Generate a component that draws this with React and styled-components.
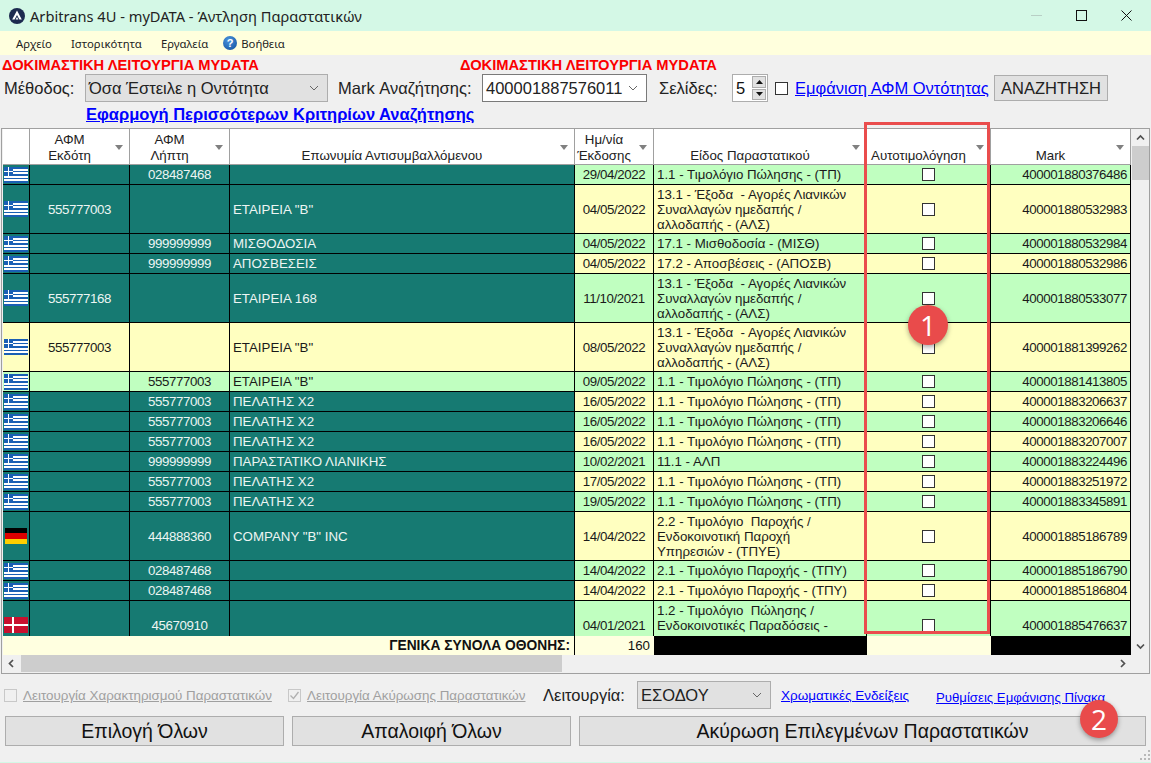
import React from 'react';
import styled, { createGlobalStyle } from 'styled-components';

const GlobalStyle = createGlobalStyle`
  html, body {
    margin: 0;
    padding: 0;
    background: #d4f8e6;
  }
  * {
    box-sizing: border-box;
  }
`;

const Window = styled.div`
  position: relative;
  width: 1151px;
  height: 763px;
  overflow: hidden;
  background: #f0f0f0;
  font-family: "Liberation Sans", Arial, sans-serif;
  color: #111;
  display: flex;
  flex-direction: column;
  border-bottom: 1px solid #d4f8e6;
`;

const TitleBar = styled.div`
  height: 31px;
  flex: none;
  background: #d4f8e6;
  display: flex;
  align-items: center;
  padding-left: 9px;
`;

const Title = styled.div`
  margin-left: 5px;
  font-family: "Noto Sans", sans-serif;
  font-size: 14.65px;
  color: #222;
`;

const WinButtons = styled.div`
  margin-left: auto;
  display: flex;
  align-items: center;
  gap: 34px;
  padding-right: 19px;
`;

const MenuBar = styled.div`
  height: 24px;
  flex: none;
  background: #ffffdd;
  display: flex;
  align-items: center;
  padding-left: 16px;
  font-family: "Noto Sans", sans-serif;
  font-size: 11.3px;
  color: #222;
`;

const MenuItem = styled.span`
  margin-right: ${p => p.$gap || 19}px;
`;

const HelpIcon = styled.span`
  width: 14px;
  height: 14px;
  margin-right: 4px;
  border-radius: 50%;
  background: radial-gradient(circle at 40% 30%, #4a93dd, #0f4f9c);
  color: #fff;
  font: bold 11px "Liberation Sans", sans-serif;
  display: flex;
  align-items: center;
  justify-content: center;
`;

const WarningRow = styled.div`
  height: 19px;
  flex: none;
  display: grid;
  grid-template-columns: 458px auto;
  align-items: center;
  padding-left: 2px;
  color: #fb0000;
  font-size: 14.7px;
  font-weight: bold;
`;

const Toolbar = styled.div`
  height: 28px;
  flex: none;
  display: flex;
  align-items: center;
  padding-left: 4px;
  font-size: 16.5px;
`;

const Label = styled.span`
  flex: none;
  width: ${p => p.$width}px;
  color: #222;
  font-size: 16.5px;
`;

const Combo = styled.div`
  width: ${p => p.$width}px;
  height: 28px;
  flex: none;
  padding: 0 8px 0 3px;
  display: flex;
  align-items: center;
  justify-content: space-between;
  background: ${p => (p.$plain ? '#fff' : '#e1e1e1')};
  border: 1px solid ${p => (p.$plain ? '#7a7a7a' : '#adadad')};
  font-size: 16.5px;
  color: #222;
  margin-right: ${p => p.$gap || 0}px;
`;

const Spinner = styled.div`
  width: 36px;
  height: 28px;
  flex: none;
  padding: 1px 1px 1px 3px;
  display: flex;
  align-items: center;
  justify-content: space-between;
  background: #fff;
  border: 1px solid #adadad;
  margin-right: 7px;
`;

const SpinButtons = styled.div`
  width: 14px;
  height: 100%;
  display: flex;
  flex-direction: column;
  gap: 1px;
`;

const SpinButton = styled.div`
  flex: 1;
  background: #e1e1e1;
  border: 1px solid #adadad;
  display: flex;
  align-items: center;
  justify-content: center;
`;

const PlainCheck = styled.span`
  width: 13px;
  height: 13px;
  flex: none;
  display: block;
  background: #fff;
  border: 1px solid #333;
  margin-right: ${p => p.$gap || 0}px;
`;

const Link = styled.a`
  flex: none;
  width: ${p => (p.$width ? `${p.$width}px` : 'auto')};
  color: #0000ff;
  text-decoration: underline;
  font-size: ${p => p.$size || 16.5}px;
  font-weight: ${p => (p.$bold ? 'bold' : 'normal')};
  white-space: nowrap;
`;

const SearchButton = styled.div`
  width: 114px;
  height: 26px;
  flex: none;
  background: #e1e1e1;
  border: 1px solid #adadad;
  font-size: 16.5px;
  color: #222;
  display: flex;
  align-items: center;
  justify-content: center;
`;

const LinkRow = styled.div`
  height: 26px;
  flex: none;
  display: flex;
  align-items: center;
  padding: 0 0 2px 86px;
`;

const Panel = styled.div`
  height: 546px;
  flex: none;
  margin: 0 1px;
  padding-left: 1px;
  border: 1px solid #a0a0a0;
  display: grid;
  grid-template-columns: 1128px 18px;
  grid-template-rows: 526px 17px;
`;

const GridArea = styled.div`
  display: flex;
  flex-direction: column;
  min-width: 0;
`;

const COLUMNS = '27px 100px 100px 345px 79px 213px 124px 140px';

const HeaderRow = styled.div`
  height: 36px;
  flex: none;
  display: grid;
  grid-template-columns: ${COLUMNS};
  background: #fff;
  border-bottom: 1px solid #a0a0a0;
`;

const HeaderCell = styled.div`
  position: relative;
  display: flex;
  align-items: flex-end;
  justify-content: center;
  padding: 0 20px 0 0;
  border-right: 1px solid #a0a0a0;
  font-size: 13.3px;
  line-height: 16px;
  text-align: center;
  white-space: pre-line;
  color: #222;
`;

const Caret = styled.span`
  position: absolute;
  right: 6px;
  top: 16px;
  width: 0;
  height: 0;
  border-left: 4.5px solid transparent;
  border-right: 4.5px solid transparent;
  border-top: 5px solid #808080;
`;

const Body = styled.div`
  height: 471px;
  flex: none;
  overflow: hidden;
`;

const Row = styled.div`
  height: ${p => p.$h}px;
  display: grid;
  grid-template-columns: ${COLUMNS};
`;

const cellColors = {
  teal: '#167a72',
  green: '#c0ffc0',
  yellow: '#ffffc0',
};

const Cell = styled.div`
  display: flex;
  align-items: center;
  justify-content: ${p => p.$align || 'center'};
  padding: 0 ${p => p.$padRight || 0}px 0 ${p => p.$padLeft || 0}px;
  background: ${p => cellColors[p.$tone]};
  color: ${p => (p.$tone === 'teal' ? '#edf5f3' : '#1a1a1a')};
  border-right: 1px solid #000;
  border-bottom: 1px solid #000;
  font-size: 13.3px;
  line-height: 15px;
  letter-spacing: ${p => (p.$digits ? '-0.42px' : '0')};
  white-space: pre;
  overflow: hidden;
`;

const Footer = styled.div`
  height: 19px;
  flex: none;
  display: grid;
  grid-template-columns: 572px 79px 213px 124px 140px;
  background: #ffffe0;
  font-size: 13.3px;
`;

const FooterCell = styled.div`
  display: flex;
  align-items: center;
  justify-content: flex-end;
  padding-right: 4px;
  background: ${p => (p.$black ? '#000' : 'transparent')};
  font-size: ${p => (p.$bold ? '13.8px' : '13.3px')};
  font-weight: ${p => (p.$bold ? 'bold' : 'normal')};
  border-right: ${p => (p.$line ? '1px solid #000' : '0')};
`;

const VScroll = styled.div`
  background: #f0f0f0;
  display: flex;
  flex-direction: column;
  align-items: center;
`;

const VThumb = styled.div`
  width: 17px;
  height: 34px;
  background: #cdcdcd;
  flex: none;
`;

const ArrowSlot = styled.div`
  flex: none;
  width: 17px;
  height: 17px;
  display: flex;
  align-items: center;
  justify-content: center;
  margin-top: ${p => (p.$end ? 'auto' : '0')};
  margin-left: ${p => (p.$endX ? 'auto' : '0')};
`;

const HScroll = styled.div`
  display: flex;
  background: #f0f0f0;
`;

const HThumb = styled.div`
  width: 541px;
  height: 17px;
  background: #cdcdcd;
  margin-left: 1px;
`;

const Options = styled.div`
  height: 42px;
  flex: none;
  display: flex;
  align-items: center;
  padding-left: 4px;
`;

const DisabledOption = styled.div`
  flex: none;
  width: ${p => p.$width}px;
  display: flex;
  align-items: center;
  gap: 6px;
  color: #a0a0a0;
  font-size: 13.4px;
  text-decoration: underline;
`;

const DisabledBox = styled.span`
  width: 13px;
  height: 13px;
  flex: none;
  background: #f0f0f0;
  border: 1px solid #c8c8c8;
  display: flex;
  align-items: center;
  justify-content: center;
`;

const OptionLink = styled(Link)`
  position: relative;
  top: ${p => p.$drop || 0}px;
`;

const Actions = styled.div`
  height: 30px;
  flex: none;
  display: grid;
  grid-template-columns: 279px 279px 567px;
  gap: 8px;
  padding-left: 5px;
`;

const ActionButton = styled.div`
  background: #e1e1e1;
  border: 1px solid #adadad;
  font-size: 19.5px;
  color: #111;
  display: flex;
  align-items: center;
  justify-content: center;
`;

const Grip = styled.svg`
  position: absolute;
  right: 1px;
  bottom: 2px;
`;

const Highlight = styled.div`
  position: absolute;
  left: 864px;
  top: 122px;
  width: 126px;
  height: 512px;
  border: 3px solid #ea4d4d;
  pointer-events: none;
`;

const Badge = styled.div`
  position: absolute;
  left: ${p => p.$x}px;
  top: ${p => p.$y}px;
  width: ${p => p.$size}px;
  height: ${p => p.$size}px;
  border-radius: 50%;
  background: #e94b4b;
  box-shadow: 0 2px 5px rgba(0, 0, 0, 0.35);
  color: #fff;
  font-family: "Open Sans", sans-serif;
  font-size: 28px;
  display: flex;
  align-items: center;
  justify-content: center;
`;

const AppLogo = () => (
  <svg width="16" height="16" viewBox="0 0 16 16">
    <circle cx="8" cy="8" r="8" fill="#1d2b4f" />
    <path d="M8 2.6 L12.8 11.4 L10.4 11.4 L8 7 L5.6 11.4 L3.2 11.4 Z" fill="#fff" />
    <path d="M6.6 11.4 L8 9 L9.4 11.4 Z" fill="#fff" />
  </svg>
);

const WindowIcons = () => (
  <WinButtons>
    <svg width="11" height="11" viewBox="0 0 11 11">
      <path d="M0 5.5 H11" stroke="#b8cfc5" strokeWidth="1" />
    </svg>
    <svg width="11" height="11" viewBox="0 0 11 11">
      <rect x="0.5" y="0.5" width="10" height="10" fill="none" stroke="#111" strokeWidth="1" />
    </svg>
    <svg width="11" height="11" viewBox="0 0 11 11">
      <path d="M0.5 0.5 L10.5 10.5 M10.5 0.5 L0.5 10.5" stroke="#111" strokeWidth="1" />
    </svg>
  </WinButtons>
);

const Chevron = () => (
  <svg width="10" height="6" viewBox="0 0 10 6">
    <path d="M1 1 L5 5 L9 1" fill="none" stroke="#666" strokeWidth="1" />
  </svg>
);

const ScrollArrow = ({ d }) => (
  <svg width="9" height="9" viewBox="0 0 9 9">
    <path d={d} fill="none" stroke="#505050" strokeWidth="1.7" />
  </svg>
);

const SpinArrow = ({ down }) => (
  <svg width="7" height="4" viewBox="0 0 7 4">
    <path d={down ? 'M0 0 H7 L3.5 4 Z' : 'M0 4 H7 L3.5 0 Z'} fill="#111" />
  </svg>
);

const GreekFlag = () => (
  <svg width="24" height="16" viewBox="0 0 27 18" shapeRendering="crispEdges">
    <rect width="27" height="18" fill="#1a5fb4" />
    <path d="M10 3 H27 M10 7 H27 M0 11 H27 M0 15 H27" stroke="#fff" strokeWidth="2" />
    <path d="M5 0 V10 M0 5 H10" stroke="#fff" strokeWidth="2" />
  </svg>
);

const GermanFlag = () => (
  <svg width="24" height="16" viewBox="0 0 24 18" shapeRendering="crispEdges">
    <rect width="24" height="6" fill="#000" />
    <rect y="6" width="24" height="6" fill="#dd0000" />
    <rect y="12" width="24" height="6" fill="#ffce00" />
  </svg>
);

const DanishFlag = () => (
  <svg width="24" height="16" viewBox="0 0 24 16" shapeRendering="crispEdges">
    <rect width="24" height="16" fill="#c8102e" />
    <path d="M9 0 V16 M0 8 H24" stroke="#fff" strokeWidth="2" />
  </svg>
);

const flags = { gr: GreekFlag, de: GermanFlag, dk: DanishFlag };

const INV = '1.1 - Τιμολόγιο Πώλησης - (ΤΠ)';
const EXP = '13.1 - Έξοδα  - Αγορές Λιανικών\nΣυναλλαγών ημεδαπής /\nαλλοδαπής - (ΑΛΣ)';
const SRV = '2.1 - Τιμολόγιο Παροχής - (ΤΠΥ)';

const rows = [
  { receiver: '028487468', date: '29/04/2022', type: INV, mark: '400001880376486' },
  { h: 49, issuer: '555777003', name: 'ΕΤΑΙΡΕΙΑ "Β"', date: '04/05/2022', type: EXP, mark: '400001880532983' },
  { receiver: '999999999', name: 'ΜΙΣΘΟΔΟΣΙΑ', date: '04/05/2022', type: '17.1 - Μισθοδοσία - (ΜΙΣΘ)', mark: '400001880532984' },
  { receiver: '999999999', name: 'ΑΠΟΣΒΕΣΕΙΣ', date: '04/05/2022', type: '17.2 - Αποσβέσεις - (ΑΠΟΣΒ)', mark: '400001880532986' },
  { h: 49, issuer: '555777168', name: 'ΕΤΑΙΡΕΙΑ 168', date: '11/10/2021', type: EXP, mark: '400001880533077' },
  { h: 49, lead: 'yellow', issuer: '555777003', name: 'ΕΤΑΙΡΕΙΑ "Β"', date: '08/05/2022', type: EXP, mark: '400001881399262' },
  { lead: 'green', receiver: '555777003', name: 'ΕΤΑΙΡΕΙΑ "Β"', date: '09/05/2022', type: INV, mark: '400001881413805' },
  { receiver: '555777003', name: 'ΠΕΛΑΤΗΣ Χ2', date: '16/05/2022', type: INV, mark: '400001883206637' },
  { receiver: '555777003', name: 'ΠΕΛΑΤΗΣ Χ2', date: '16/05/2022', type: INV, mark: '400001883206646' },
  { receiver: '555777003', name: 'ΠΕΛΑΤΗΣ Χ2', date: '16/05/2022', type: INV, mark: '400001883207007' },
  { receiver: '999999999', name: 'ΠΑΡΑΣΤΑΤΙΚΟ ΛΙΑΝΙΚΗΣ', date: '10/02/2021', type: '11.1 - ΑΛΠ', mark: '400001883224496' },
  { receiver: '555777003', name: 'ΠΕΛΑΤΗΣ Χ2', date: '17/05/2022', type: INV, mark: '400001883251972' },
  { receiver: '555777003', name: 'ΠΕΛΑΤΗΣ Χ2', date: '19/05/2022', type: INV, mark: '400001883345891' },
  { h: 49, flag: 'de', receiver: '444888360', name: 'COMPANY "B" INC', date: '14/04/2022', type: '2.2 - Τιμολόγιο  Παροχής /\nΕνδοκοινοτική Παροχή\nΥπηρεσιών - (ΤΠΥΕ)', mark: '400001885186789' },
  { receiver: '028487468', date: '14/04/2022', type: SRV, mark: '400001885186790' },
  { receiver: '028487468', date: '14/04/2022', type: SRV, mark: '400001885186804' },
  { h: 49, flag: 'dk', receiver: '45670910', date: '04/01/2021', type: '1.2 - Τιμολόγιο  Πώλησης /\nΕνδοκοινοτικές Παραδόσεις -\n(ΤΠΕΠ)', mark: '400001885476637' },
];

const headers = ['', 'ΑΦΜ\nΕκδότη', 'ΑΦΜ\nΛήπτη', 'Επωνυμία Αντισυμβαλλόμενου', 'Ημ/νία\nΈκδοσης', 'Είδος Παραστατικού', 'Αυτοτιμολόγηση', 'Mark'];

function DataRow({ row, index }) {
  const tone = index % 2 === 0 ? 'green' : 'yellow';
  const lead = row.lead || 'teal';
  const Flag = flags[row.flag || 'gr'];
  return (
    <Row $h={row.h || 20}>
      <Cell $tone={lead} $padRight={1}><Flag /></Cell>
      <Cell $tone={lead} $digits>{row.issuer}</Cell>
      <Cell $tone={lead} $digits>{row.receiver}</Cell>
      <Cell $tone={lead} $align="flex-start" $padLeft={3}>{row.name}</Cell>
      <Cell $tone={tone} $digits>{row.date}</Cell>
      <Cell $tone={tone} $align="flex-start" $padLeft={3}>{row.type}</Cell>
      <Cell $tone={tone}><PlainCheck /></Cell>
      <Cell $tone={tone} $align="flex-end" $padRight={3} $digits>{row.mark}</Cell>
    </Row>
  );
}

function App() {
  return (
    <Window>
      <GlobalStyle />
      <TitleBar>
        <AppLogo />
        <Title>Arbitrans 4U - myDATA - Άντληση Παραστατικών</Title>
        <WindowIcons />
      </TitleBar>
      <MenuBar>
        <MenuItem>Αρχείο</MenuItem>
        <MenuItem>Ιστορικότητα</MenuItem>
        <MenuItem $gap={15}>Εργαλεία</MenuItem>
        <HelpIcon>?</HelpIcon>
        <MenuItem>Βοήθεια</MenuItem>
      </MenuBar>
      <WarningRow>
        <span>ΔΟΚΙΜΑΣΤΙΚΗ ΛΕΙΤΟΥΡΓΙΑ MYDATA</span>
        <span>ΔΟΚΙΜΑΣΤΙΚΗ ΛΕΙΤΟΥΡΓΙΑ MYDATA</span>
      </WarningRow>
      <Toolbar>
        <Label $width={81}>Μέθοδος:</Label>
        <Combo $width={243} $gap={10}>Όσα Έστειλε η Οντότητα<Chevron /></Combo>
        <Label $width={144}>Mark Αναζήτησης:</Label>
        <Combo $width={165} $gap={12} $plain>400001887576011<Chevron /></Combo>
        <Label $width={73}>Σελίδες:</Label>
        <Spinner>
          5
          <SpinButtons>
            <SpinButton><SpinArrow /></SpinButton>
            <SpinButton><SpinArrow down /></SpinButton>
          </SpinButtons>
        </Spinner>
        <PlainCheck $gap={7} />
        <Link $width={199}>Εμφάνιση ΑΦΜ Οντότητας</Link>
        <SearchButton>ΑΝΑΖΗΤΗΣΗ</SearchButton>
      </Toolbar>
      <LinkRow>
        <Link $bold>Εφαρμογή Περισσότερων Κριτηρίων Αναζήτησης</Link>
      </LinkRow>
      <Panel>
        <GridArea>
          <HeaderRow>
            {headers.map((label, i) => (
              <HeaderCell key={i}>
                {label}
                {i > 0 && <Caret />}
              </HeaderCell>
            ))}
          </HeaderRow>
          <Body>
            {rows.map((row, i) => (
              <DataRow key={row.mark} row={row} index={i} />
            ))}
          </Body>
          <Footer>
            <FooterCell $bold $line>ΓΕΝΙΚΑ ΣΥΝΟΛΑ ΟΘΟΝΗΣ:</FooterCell>
            <FooterCell>160</FooterCell>
            <FooterCell $black />
            <FooterCell />
            <FooterCell $black />
          </Footer>
        </GridArea>
        <VScroll>
          <ArrowSlot><ScrollArrow d="M1 6.5 L4.5 3 L8 6.5" /></ArrowSlot>
          <VThumb />
          <ArrowSlot $end><ScrollArrow d="M1 2.5 L4.5 6 L8 2.5" /></ArrowSlot>
        </VScroll>
        <HScroll>
          <ArrowSlot><ScrollArrow d="M6 1 L2.5 4.5 L6 8" /></ArrowSlot>
          <HThumb />
          <ArrowSlot $endX><ScrollArrow d="M3 1 L6.5 4.5 L3 8" /></ArrowSlot>
        </HScroll>
        <div />
      </Panel>
      <Options>
        <DisabledOption $width={284}>
          <DisabledBox />
          Λειτουργία Χαρακτηρισμού Παραστατικών
        </DisabledOption>
        <DisabledOption $width={255}>
          <DisabledBox>
            <svg width="11" height="11" viewBox="0 0 11 11">
              <path d="M1.5 5.5 L4.5 8.5 L9.5 2" fill="none" stroke="#b0b0b0" strokeWidth="1.3" />
            </svg>
          </DisabledBox>
          Λειτουργία Ακύρωσης Παραστατικών
        </DisabledOption>
        <Label $width={94}>Λειτουργία:</Label>
        <Combo $width={134} $gap={10}>ΕΣΟΔΟΥ<Chevron /></Combo>
        <OptionLink $size={13.5} $width={155}>Χρωματικές Ενδείξεις</OptionLink>
        <OptionLink $size={13.2} $drop={2}>Ρυθμίσεις Εμφάνισης Πίνακα</OptionLink>
      </Options>
      <Actions>
        <ActionButton>Επιλογή Όλων</ActionButton>
        <ActionButton>Απαλοιφή Όλων</ActionButton>
        <ActionButton>Ακύρωση Επιλεγμένων Παραστατικών</ActionButton>
      </Actions>
      <Grip width="11" height="11" viewBox="0 0 11 11">
        <path d="M9 1h2v2H9zM5 5h2v2H5zM9 5h2v2H9zM1 9h2v2H1zM5 9h2v2H5zM9 9h2v2H9z" fill="#b8b8b8" />
      </Grip>
      <Highlight />
      <Badge $x={908} $y={305} $size={40}>1</Badge>
      <Badge $x={1080} $y={700} $size={38}>2</Badge>
    </Window>
  );
}

export default App;
